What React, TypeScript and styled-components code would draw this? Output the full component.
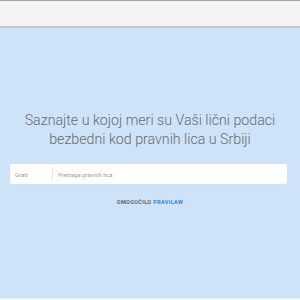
import React from 'react';
import styled, { createGlobalStyle } from 'styled-components';

const Global = createGlobalStyle`
  html, body {
    margin: 0;
    padding: 0;
    background: #eef4fa;
  }
  body {
    font-family: Roboto, "Liberation Sans", sans-serif;
  }
`;

const Page = styled.div`
  width: 300px;
  height: 300px;
  display: flex;
  flex-direction: column;
  overflow: hidden;
`;

const TopBar = styled.header`
  height: 25px;
  flex: none;
  background: #f3f3f3;
  border-top: 1px solid #a3a3ab;
  border-bottom: 2px solid #c4c6cc;
`;

const Hero = styled.main`
  height: 270px;
  flex: none;
  background: #cfe3f8;
  display: flex;
  flex-direction: column;
  align-items: center;
  padding-top: 83px;
  box-sizing: border-box;
`;

const Title = styled.h1`
  margin: 0;
  font-family: Roboto, "Liberation Sans", sans-serif;
  font-weight: 300;
  font-size: 14.2px;
  line-height: 19px;
  color: #666a6e;
  text-align: center;
`;

const Search = styled.div`
  margin-top: 15px;
  width: 277px;
  height: 20px;
  align-self: flex-start;
  margin-left: 10px;
  background: #fff;
  border-radius: 2px;
  display: flex;
  align-items: center;
  box-shadow: 0 0 1px rgba(0, 0, 0, 0.08);
`;

const Field = styled.span<{ $width?: number }>`
  font-family: Roboto, "Liberation Sans", sans-serif;
  font-size: 6px;
  color: #9a9ea3;
  padding-left: 5px;
  ${({ $width }) => ($width ? `width: ${$width}px; flex: none;` : 'flex: 1;')}
`;

const Divider = styled.span`
  width: 1px;
  height: 14px;
  background: #e6e6e6;
  flex: none;
`;

const Credit = styled.p`
  margin: 15px 0 0;
  font-family: Roboto, "Liberation Sans", sans-serif;
  font-weight: 700;
  font-size: 5.5px;
  letter-spacing: 0.35px;
  color: #62676d;
  text-transform: uppercase;
`;

const Brand = styled.span`
  color: #3b7fd8;
`;

export default function App() {
  return (
    <Page>
      <Global />
      <TopBar />
      <Hero>
        <Title>
          Saznajte u kojoj meri su Vaši lični podaci
          <br />
          bezbedni kod pravnih lica u Srbiji
        </Title>
        <Search>
          <Field $width={37}>Grad</Field>
          <Divider />
          <Field>Pretraga pravnih lica</Field>
        </Search>
        <Credit>
          Omogućilo <Brand>Pravilaw</Brand>
        </Credit>
      </Hero>
    </Page>
  );
}
